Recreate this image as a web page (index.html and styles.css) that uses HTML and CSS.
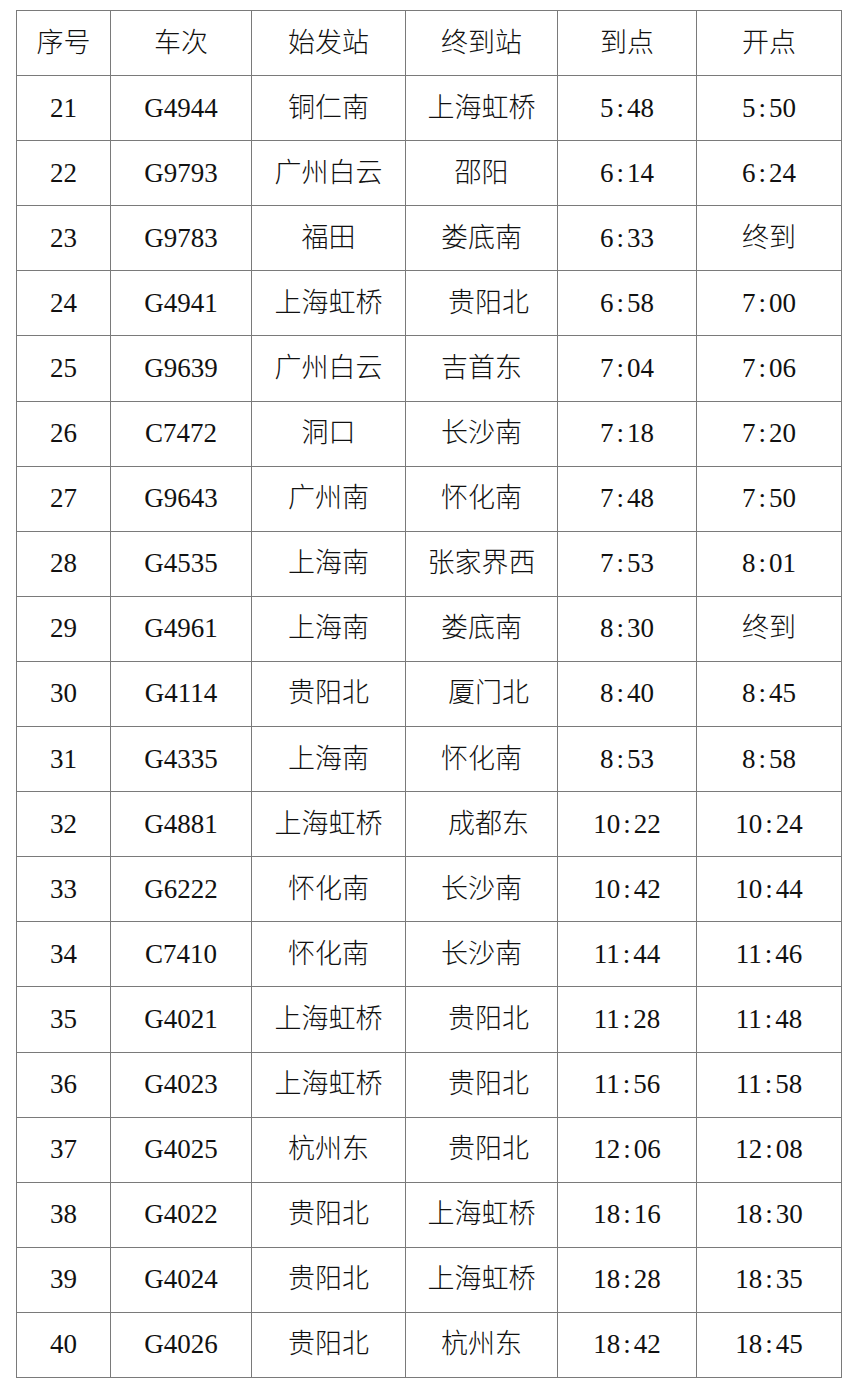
FILE: index.html
```html
<!DOCTYPE html>
<html lang="zh-CN">
<head>
<meta charset="utf-8">
<title>列车时刻表</title>
<link rel="stylesheet" href="styles.css">
</head>
<body>
<table class="schedule">
  <colgroup>
    <col class="c-no"><col class="c-train"><col class="c-from"><col class="c-to"><col class="c-arr"><col class="c-dep">
  </colgroup>
  <thead>
    <tr><th>序号</th><th>车次</th><th>始发站</th><th>终到站</th><th>到点</th><th>开点</th></tr>
  </thead>
  <tbody>
    <tr><td>21</td><td>G4944</td><td>铜仁南</td><td>上海虹桥</td><td>5<span class="colon">:</span>48</td><td>5<span class="colon">:</span>50</td></tr>
    <tr><td>22</td><td>G9793</td><td>广州白云</td><td>邵阳</td><td>6<span class="colon">:</span>14</td><td>6<span class="colon">:</span>24</td></tr>
    <tr><td>23</td><td>G9783</td><td>福田</td><td>娄底南</td><td>6<span class="colon">:</span>33</td><td>终到</td></tr>
    <tr><td>24</td><td>G4941</td><td>上海虹桥</td><td class="shift">贵阳北</td><td>6<span class="colon">:</span>58</td><td>7<span class="colon">:</span>00</td></tr>
    <tr><td>25</td><td>G9639</td><td>广州白云</td><td>吉首东</td><td>7<span class="colon">:</span>04</td><td>7<span class="colon">:</span>06</td></tr>
    <tr><td>26</td><td>C7472</td><td>洞口</td><td>长沙南</td><td>7<span class="colon">:</span>18</td><td>7<span class="colon">:</span>20</td></tr>
    <tr><td>27</td><td>G9643</td><td>广州南</td><td>怀化南</td><td>7<span class="colon">:</span>48</td><td>7<span class="colon">:</span>50</td></tr>
    <tr><td>28</td><td>G4535</td><td>上海南</td><td>张家界西</td><td>7<span class="colon">:</span>53</td><td>8<span class="colon">:</span>01</td></tr>
    <tr><td>29</td><td>G4961</td><td>上海南</td><td>娄底南</td><td>8<span class="colon">:</span>30</td><td>终到</td></tr>
    <tr><td>30</td><td>G4114</td><td>贵阳北</td><td class="shift">厦门北</td><td>8<span class="colon">:</span>40</td><td>8<span class="colon">:</span>45</td></tr>
    <tr><td>31</td><td>G4335</td><td>上海南</td><td>怀化南</td><td>8<span class="colon">:</span>53</td><td>8<span class="colon">:</span>58</td></tr>
    <tr><td>32</td><td>G4881</td><td>上海虹桥</td><td class="shift">成都东</td><td>10<span class="colon">:</span>22</td><td>10<span class="colon">:</span>24</td></tr>
    <tr><td>33</td><td>G6222</td><td>怀化南</td><td>长沙南</td><td>10<span class="colon">:</span>42</td><td>10<span class="colon">:</span>44</td></tr>
    <tr><td>34</td><td>C7410</td><td>怀化南</td><td>长沙南</td><td>11<span class="colon">:</span>44</td><td>11<span class="colon">:</span>46</td></tr>
    <tr><td>35</td><td>G4021</td><td>上海虹桥</td><td class="shift">贵阳北</td><td>11<span class="colon">:</span>28</td><td>11<span class="colon">:</span>48</td></tr>
    <tr><td>36</td><td>G4023</td><td>上海虹桥</td><td class="shift">贵阳北</td><td>11<span class="colon">:</span>56</td><td>11<span class="colon">:</span>58</td></tr>
    <tr><td>37</td><td>G4025</td><td>杭州东</td><td class="shift">贵阳北</td><td>12<span class="colon">:</span>06</td><td>12<span class="colon">:</span>08</td></tr>
    <tr><td>38</td><td>G4022</td><td>贵阳北</td><td>上海虹桥</td><td>18<span class="colon">:</span>16</td><td>18<span class="colon">:</span>30</td></tr>
    <tr><td>39</td><td>G4024</td><td>贵阳北</td><td>上海虹桥</td><td>18<span class="colon">:</span>28</td><td>18<span class="colon">:</span>35</td></tr>
    <tr><td>40</td><td>G4026</td><td>贵阳北</td><td>杭州东</td><td>18<span class="colon">:</span>42</td><td>18<span class="colon">:</span>45</td></tr>
  </tbody>
</table>
</body>
</html>
```

FILE: styles.css
```css
html, body {
  margin: 0;
  padding: 0;
  background: #ffffff;
}

body {
  padding: 10px 0 0 16px;
  font-family: "Liberation Serif", "Noto Sans CJK SC", serif;
  color: #111111;
}

.schedule {
  border-collapse: collapse;
  table-layout: fixed;
  width: 825px;
  font-size: 27px;
}

.c-no { width: 94px; }
.c-train { width: 141px; }
.c-from { width: 154px; }
.c-to { width: 152px; }
.c-arr { width: 139px; }
.c-dep { width: 145px; }

.schedule th,
.schedule td {
  border: 1px solid #7a7a7a;
  height: 64px;
  padding: 0;
  text-align: center;
  vertical-align: middle;
  font-weight: 300;
  line-height: 1;
  white-space: nowrap;
}

.schedule tr {
  height: 65.1px;
}

.schedule .shift {
  padding-left: 14px;
}

.colon {
  display: inline-block;
  width: 13.5px;
  text-align: center;
}
```
